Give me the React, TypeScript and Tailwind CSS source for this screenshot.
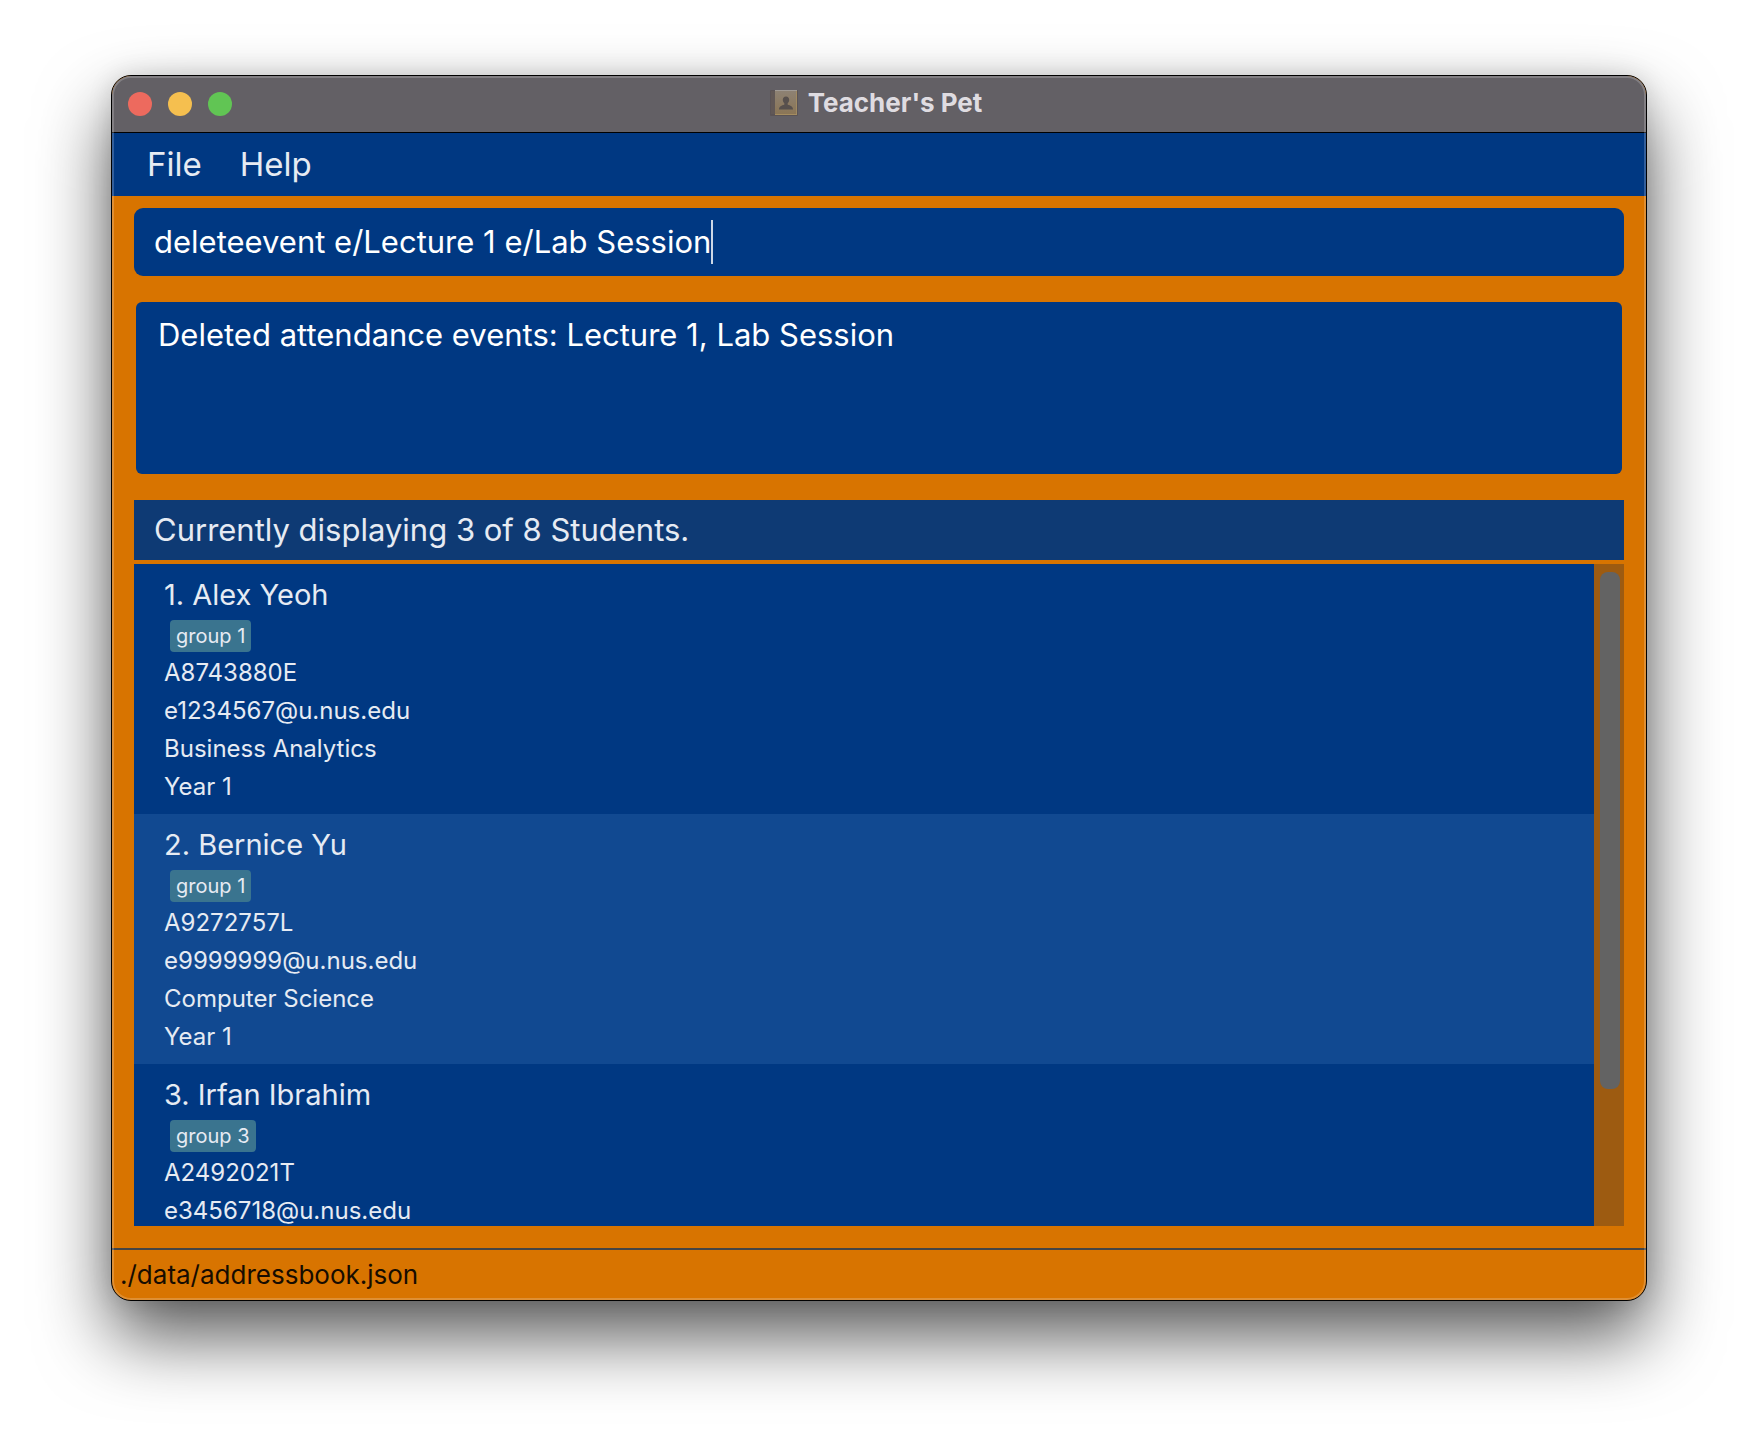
import { useState } from "react";

type Student = {
  name: string;
  group: string;
  details: string[];
};

const students: Student[] = [
  { name: "Alex Yeoh", group: "group 1", details: ["A8743880E", "e1234567@u.nus.edu", "Business Analytics", "Year 1"] },
  { name: "Bernice Yu", group: "group 1", details: ["A9272757L", "e9999999@u.nus.edu", "Computer Science", "Year 1"] },
  { name: "Irfan Ibrahim", group: "group 3", details: ["A2492021T", "e3456718@u.nus.edu"] },
];

function BookIcon() {
  return (
    <svg width="28" height="28" viewBox="0 0 28 28" aria-hidden="true">
      <defs>
        <linearGradient id="cover" x1="0" y1="0" x2="0" y2="1">
          <stop offset="0" stopColor="#8d8173" />
          <stop offset="1" stopColor="#8b7656" />
        </linearGradient>
      </defs>
      <rect x="0" y="1" width="28" height="26" rx="1" fill="#5a5355" />
      <rect x="1" y="2" width="4" height="23" fill="#615856" />
      <rect x="5" y="2" width="22" height="23" fill="url(#cover)" />
      <rect x="5" y="1" width="22" height="1" fill="#a09a94" />
      <rect x="26" y="2" width="1" height="23" fill="#a08a62" />
      <rect x="5" y="25" width="22" height="1" fill="#a58d60" />
      <path
        d="M16 7.500c-2 0-3.200 1.400-3.200 3.300 0 1.500.6 2.600 1.500 3.300v1.600c-2.600.8-5.300 1.300-5.300 4.800h14c0-3.500-2.700-4-5.300-4.800v-1.600c.9-.7 1.500-1.800 1.500-3.300 0-1.900-1.200-3.300-3.200-3.300z"
        fill="#57504d"
      />
    </svg>
  );
}

function TitleBar() {
  return (
    <header className="grid h-[57px] shrink-0 grid-cols-[1fr_auto_1fr] items-center border-b border-black bg-[#636065]">
      <div className="flex gap-4 pl-4">
        <button type="button" aria-label="Close" className="size-6 rounded-full bg-[#ed6a5e]" />
        <button type="button" aria-label="Minimize" className="size-6 rounded-full bg-[#f5bf4f]" />
        <button type="button" aria-label="Zoom" className="size-6 rounded-full bg-[#61c554]" />
      </div>
      <h1 className="flex items-center gap-2.5 pr-1.5 pb-0.5 text-[26px] leading-8 font-bold text-[#dfdce1]">
        <BookIcon />
        Teacher's Pet
      </h1>
    </header>
  );
}

function StudentRow({ student, index }: { student: Student; index: number }) {
  return (
    <li className="bg-[#003882] pt-2.5 pb-2 pl-[30px] text-[#e6ebf3] last:pb-0 even:bg-[#114991]">
      <h2 className="text-[29px] leading-[42px]">
        {index + 1}. {student.name}
      </h2>
      <div className="mt-1 mb-0.5 flex pl-1.5">
        <span className="rounded bg-[#3a748f] px-1.5 text-xl leading-8">{student.group}</span>
      </div>
      <div className="text-2xl leading-[38px]">
        {student.details.map((detail) => (
          <p key={detail}>{detail}</p>
        ))}
      </div>
    </li>
  );
}

export default function App() {
  const [command, setCommand] = useState("deleteevent e/Lecture 1 e/Lab Session");

  return (
    <div className="flex h-screen flex-col bg-white px-[111px] pt-[75px] pb-[147px] font-['Inter',sans-serif]">
      <div className="relative flex min-h-0 flex-1 flex-col overflow-hidden rounded-[20px] border border-black bg-[#d87400] shadow-[0_36px_72px_rgba(0,0,0,0.65),0_0_24px_rgba(0,0,0,0.12)]">
        <TitleBar />
        <nav className="flex h-[63px] shrink-0 items-center gap-[38px] bg-[#003882] pl-[35px] text-[33px] text-[#e6ebf3]">
          <button type="button">File</button>
          <button type="button">Help</button>
        </nav>

        <main className="flex min-h-0 flex-1 flex-col px-[22px] pt-3 pb-[22px]">
          <div className="flex h-[68px] shrink-0 items-center rounded-[9px] bg-[#003882] pl-5">
            <input
              aria-label="Command"
              value={command}
              onChange={(e) => setCommand(e.target.value)}
              className="bg-transparent text-[31px] text-white caret-transparent outline-none [field-sizing:content]"
            />
            <span className="h-11 w-0.5 bg-white/80" />
          </div>

          <output className="mx-0.5 mt-[26px] h-[172px] shrink-0 rounded-md bg-[#003882] px-[22px] pt-3 text-[31px] leading-[42px] text-white">
            Deleted attendance events: Lecture 1, Lab Session
          </output>

          <p className="mt-[26px] h-[60px] shrink-0 bg-[#0e3a74] pl-5 text-[31px] leading-[60px] text-[#e6ebf3]">
            Currently displaying 3 of 8 Students.
          </p>

          <section aria-label="Students" className="mt-1 flex min-h-0 flex-1">
            <ul className="flex-1 overflow-hidden bg-[#003882]">
              {students.map((s, i) => (
                <StudentRow key={s.name} student={s} index={i} />
              ))}
            </ul>
            <div className="w-[30px] bg-[#9d5b11] pt-2 pr-1 pl-1.5">
              <div className="h-[79%] rounded-lg bg-[#636363]" />
            </div>
          </section>
        </main>

        <footer className="h-[52px] shrink-0 border-t-2 border-[#444446] pl-2 text-[26px] leading-[50px] text-[#160c00]">
          ./data/addressbook.json
        </footer>
        <div className="pointer-events-none absolute inset-0 rounded-[19px] border-2 border-white/20" />
      </div>
    </div>
  );
}
